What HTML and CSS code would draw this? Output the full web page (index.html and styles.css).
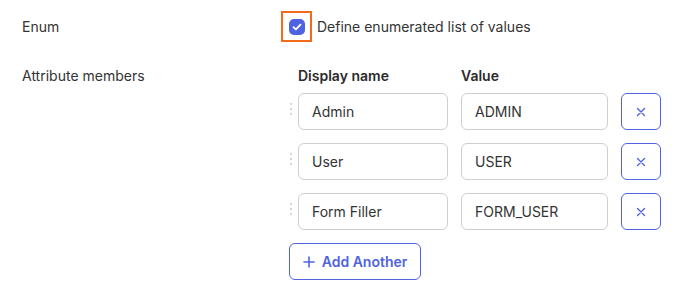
FILE: index.html
```html
<!DOCTYPE html>
<html lang="en">
<head>
    <meta charset="UTF-8">
    <title>Attribute settings</title>
    <link rel="stylesheet" href="styles.css">
</head>
<body>
    <div class="form">
        <div class="form-row enum-row">
            <div class="form-label">Enum</div>
            <div class="form-field">
                <label class="check">
                    <span class="check-focus">
                        <span class="check-box">
                            <svg width="10" height="8" viewBox="0 0 10 8"><path d="M1.5 4.2 L3.9 6.4 L8.5 1.6" fill="none" stroke="#fff" stroke-width="1.8" stroke-linecap="round" stroke-linejoin="round"/></svg>
                        </span>
                    </span>
                    <span class="check-text">Define enumerated list of values</span>
                </label>
            </div>
        </div>

        <div class="form-row">
            <div class="form-label">Attribute members</div>
            <div class="form-field members">
                <div class="members-head">
                    <span class="col-name">Display name</span>
                    <span class="col-value">Value</span>
                </div>

                <div class="member">
                    <span class="drag"><i></i><i></i><i></i></span>
                    <input class="text-input name-input" value="Admin">
                    <input class="text-input value-input" value="ADMIN">
                    <button class="remove-btn"><svg width="10" height="10" viewBox="0 0 10 10"><path d="M1.5 1.5 L8.5 8.5 M8.5 1.5 L1.5 8.5" stroke="currentColor" stroke-width="1.4" stroke-linecap="round"/></svg></button>
                </div>
                <div class="member">
                    <span class="drag"><i></i><i></i><i></i></span>
                    <input class="text-input name-input" value="User">
                    <input class="text-input value-input" value="USER">
                    <button class="remove-btn"><svg width="10" height="10" viewBox="0 0 10 10"><path d="M1.5 1.5 L8.5 8.5 M8.5 1.5 L1.5 8.5" stroke="currentColor" stroke-width="1.4" stroke-linecap="round"/></svg></button>
                </div>
                <div class="member">
                    <span class="drag"><i></i><i></i><i></i></span>
                    <input class="text-input name-input" value="Form Filler">
                    <input class="text-input value-input" value="FORM_USER">
                    <button class="remove-btn"><svg width="10" height="10" viewBox="0 0 10 10"><path d="M1.5 1.5 L8.5 8.5 M8.5 1.5 L1.5 8.5" stroke="currentColor" stroke-width="1.4" stroke-linecap="round"/></svg></button>
                </div>

                <button class="add-btn">
                    <svg width="12" height="12" viewBox="0 0 12 12"><path d="M6 1 V11 M1 6 H11" stroke="currentColor" stroke-width="1.6" stroke-linecap="round"/></svg>
                    Add Another
                </button>
            </div>
        </div>
    </div>
</body>
</html>
```

FILE: styles.css
```css
:root {
    --blue: #4f63e0;
    --text: #2b2b2b;
    --border: #cfcfcf;
    --orange: #f26a1b;
}

* {
    margin: 0;
    padding: 0;
    box-sizing: border-box;
}

body {
    background: #ffffff;
    color: var(--text);
    font-family: Inter, 'Noto Sans', sans-serif;
    font-size: 14px;
}

.form {
    padding: 11px 0 0 22px;
}

.form-row {
    display: flex;
}

.form-label {
    width: 259px;
    line-height: 31px;
    color: #333;
}

.enum-row {
    margin-bottom: 18px;
}

.check {
    display: flex;
    align-items: center;
    gap: 5px;
}

.check-focus {
    width: 31px;
    height: 31px;
    border: 2px solid var(--orange);
    display: flex;
    align-items: center;
    justify-content: center;
}

.check-box {
    width: 16px;
    height: 16px;
    border-radius: 5px;
    background: var(--blue);
    display: flex;
    align-items: center;
    justify-content: center;
}

.check-text {
    font-size: 14px;
    color: #333;
}

.members {
    padding-left: 17px;
}

.members-head {
    display: flex;
    font-weight: 600;
    font-size: 14px;
    line-height: 31px;
    margin-bottom: 2px;
}

.col-name {
    width: 163px;
}

.member {
    position: relative;
    display: flex;
    gap: 13px;
    margin-bottom: 13px;
}

.drag {
    position: absolute;
    left: -8px;
    top: 10px;
    display: flex;
    flex-direction: column;
    gap: 3px;
}

.drag i {
    width: 2px;
    height: 2px;
    background: #c8c8c8;
    border-radius: 1px;
}

.text-input {
    height: 37px;
    border: 1px solid var(--border);
    border-radius: 6px;
    padding: 0 13px;
    font-family: Inter, 'Noto Sans', sans-serif;
    font-size: 14px;
    color: #333;
    outline: none;
}

.name-input {
    width: 150px;
}

.value-input {
    width: 147px;
}

.remove-btn {
    width: 40px;
    height: 37px;
    border: 1px solid var(--blue);
    border-radius: 6px;
    background: #fff;
    color: var(--blue);
    display: flex;
    align-items: center;
    justify-content: center;
}

.add-btn {
    margin-left: -9px;
    height: 37px;
    width: 132px;
    border: 1px solid var(--blue);
    border-radius: 6px;
    background: #fff;
    color: var(--blue);
    font-family: Inter, 'Noto Sans', sans-serif;
    font-size: 14px;
    font-weight: 600;
    display: flex;
    align-items: center;
    justify-content: center;
    gap: 7px;
}
```
